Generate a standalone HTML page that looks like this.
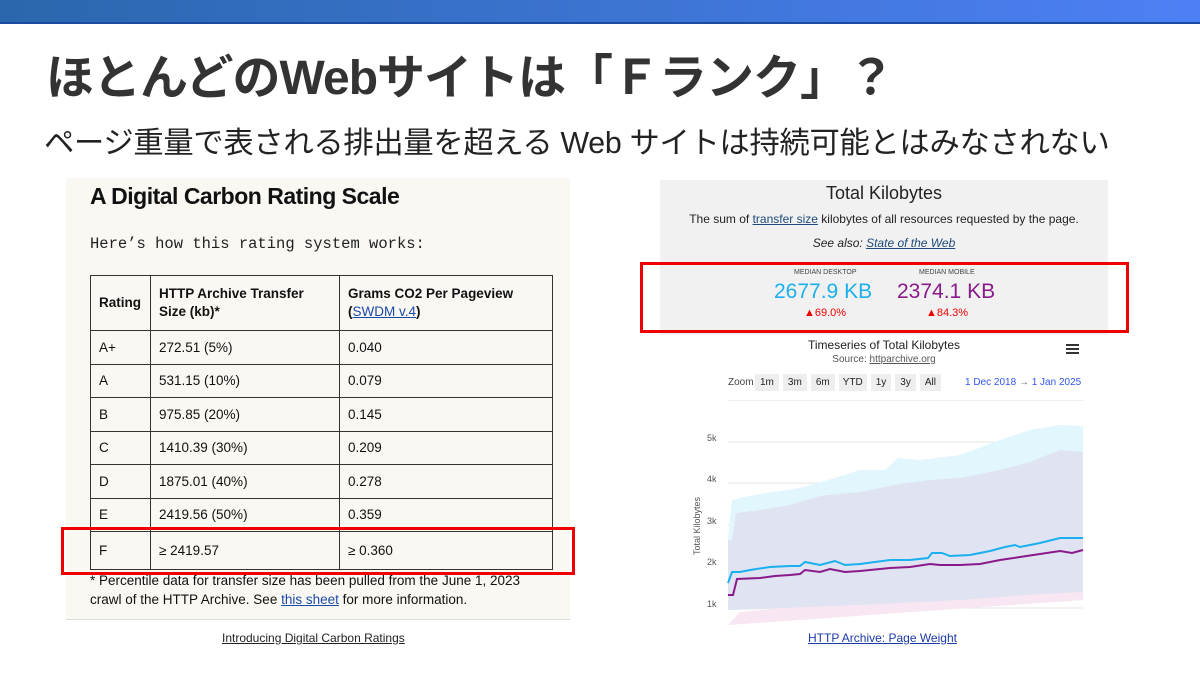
<!DOCTYPE html>
<html><head><meta charset="utf-8"><style>
*{margin:0;padding:0;box-sizing:border-box}
body{width:1200px;height:675px;position:relative;background:#fff;overflow:hidden;font-family:"Liberation Sans","Noto Sans CJK JP",sans-serif}
.a{position:absolute}
.bar{left:0;top:0;width:1200px;height:24px;background:linear-gradient(90deg,#2a67ad,#4d80f5);border-bottom:2px solid #1c4aa0}
.t1{left:46px;top:38px;font-size:48px;font-weight:bold;color:#333;letter-spacing:-1px;white-space:nowrap}
.t2{left:44px;top:118px;font-size:30.3px;color:#222;white-space:nowrap;letter-spacing:-0.3px}
.L{left:66px;top:178px;width:504px;height:442px;background:#faf8f3;border-bottom:1px solid #ddd}
table{position:absolute;left:90px;top:275px;width:463px;border-collapse:collapse;font-size:13.5px;color:#111}
td{border:1.3px solid #333;padding:0 8px;height:33.5px;font-weight:500}
th{border:1.3px solid #333;padding:0 8px;height:55px;text-align:left;font-size:13.5px;line-height:18px}
.red{border:3px solid #e00}
.R{left:660px;top:180px;width:448px;height:445px;background:#fff}
.cap{font-size:12px;color:#222;text-decoration:underline;white-space:nowrap}
</style></head><body>
<div class="a bar"></div>
<div class="a t1">ほとんどのWebサイトは「Ｆランク」？</div>
<div class="a t2">ページ重量で表される排出量を超える Web サイトは持続可能とはみなされない</div>

<div class="a L"></div>
<div class="a" style="left:90px;top:183px;font-size:23px;font-weight:bold;color:#111;letter-spacing:-0.5px">A Digital Carbon Rating Scale</div>
<div class="a" style="left:90px;top:235px;font-size:15.5px;font-family:'Liberation Mono',monospace;color:#222">Here’s how this rating system works:</div>
<table>
<tr><th style="width:60px">Rating</th><th style="width:189px">HTTP Archive Transfer Size (kb)*</th><th>Grams CO2 Per Pageview (<span style="color:#1a4aa8;text-decoration:underline;font-weight:normal">SWDM v.4</span>)</th></tr>
<tr><td>A+</td><td>272.51 (5%)</td><td>0.040</td></tr>
<tr><td>A</td><td>531.15 (10%)</td><td>0.079</td></tr>
<tr><td>B</td><td>975.85 (20%)</td><td>0.145</td></tr>
<tr><td>C</td><td>1410.39 (30%)</td><td>0.209</td></tr>
<tr><td>D</td><td>1875.01 (40%)</td><td>0.278</td></tr>
<tr><td>E</td><td>2419.56 (50%)</td><td>0.359</td></tr>
<tr><td style="height:38px">F</td><td>≥ 2419.57</td><td>≥ 0.360</td></tr>
</table>
<div class="a" style="left:90px;top:571px;font-size:13.5px;line-height:19px;color:#111;width:450px">* Percentile data for transfer size has been pulled from the June 1, 2023 crawl of the HTTP Archive. See <span style="color:#1a4aa8;text-decoration:underline">this sheet</span> for more information.</div>
<div class="a red" style="left:61px;top:527px;width:514px;height:48px"></div>
<div class="a cap" style="left:222px;top:631px">Introducing Digital Carbon Ratings</div>

<div class="a R"></div>
<div class="a" style="left:660px;top:180px;width:448px;height:155px;background:#f1f1f1"></div>
<div class="a" style="left:660px;top:183px;width:448px;text-align:center;font-size:18px;color:#222">Total Kilobytes</div>
<div class="a" style="left:660px;top:212px;width:448px;text-align:center;font-size:12px;color:#222">The sum of <u style="color:#1d4a7a">transfer size</u> kilobytes of all resources requested by the page.</div>
<div class="a" style="left:660px;top:236px;width:448px;text-align:center;font-size:12px;color:#222;font-style:italic">See also: <u style="color:#1d4a7a">State of the Web</u></div>
<div class="a" style="left:794px;top:269px;font-size:7px;color:#444">MEDIAN DESKTOP</div>
<div class="a" style="left:919px;top:269px;font-size:7px;color:#444">MEDIAN MOBILE</div>
<div class="a" style="left:774px;top:280px;font-size:21px;color:#1ab0ee">2677.9 KB</div>
<div class="a" style="left:897px;top:280px;font-size:21px;color:#8a1a8a">2374.1 KB</div>
<div class="a" style="left:804px;top:307px;font-size:11px;color:#e00">▲69.0%</div>
<div class="a" style="left:926px;top:307px;font-size:11px;color:#e00">▲84.3%</div>
<div class="a red" style="left:640px;top:262px;width:489px;height:71px"></div>
<div class="a" style="left:660px;top:338px;width:448px;text-align:center;font-size:12px;color:#222">Timeseries of Total Kilobytes</div>
<div class="a" style="left:660px;top:354px;width:448px;text-align:center;font-size:10px;color:#555">Source: <u>httparchive.org</u></div>
<div class="a" style="left:1066px;top:344px;width:13px;height:2px;background:#333;box-shadow:0 4px 0 #333,0 8px 0 #333"></div>
<div class="a" style="left:728px;top:377px;font-size:10px;color:#444">Zoom</div>
<div class="a" style="left:755px;top:374px;font-size:10px;color:#222;display:flex;gap:4px">
<span style="background:#eee;padding:3px 5px">1m</span><span style="background:#eee;padding:3px 5px">3m</span><span style="background:#eee;padding:3px 5px">6m</span><span style="background:#eee;padding:3px 4px">YTD</span><span style="background:#eee;padding:3px 5px">1y</span><span style="background:#eee;padding:3px 5px">3y</span><span style="background:#eee;padding:3px 5px">All</span></div>
<div class="a" style="left:965px;top:377px;font-size:10px;color:#3355ee;white-space:nowrap">1 Dec 2018 <span style="color:#666">→</span> 1 Jan 2025</div>
<svg class="a" style="left:660px;top:400px" width="448" height="225">
<line x1="68" y1="0" x2="423" y2="0" stroke="#ddd"/>
<g stroke="#e6e6e6"><line x1="68" y1="42" x2="423" y2="42"/><line x1="68" y1="83" x2="423" y2="83"/><line x1="68" y1="125" x2="423" y2="125"/><line x1="68" y1="166" x2="423" y2="166"/><line x1="68" y1="208" x2="423" y2="208"/></g>
<path d="M68 140 L70 118 L72 100 L80 98 L100 94 L140 88 L175 78 L200 70 L225 70 L238 58 L260 60 L300 55 L340 40 L370 30 L400 25 L423 26 L423 200 L68 210Z" fill="#e2f6fd"/>
<path d="M68 140 L72 140 L76 113 L100 110 L130 105 L160 96 L200 92 L240 84 L270 80 L300 78 L340 70 L370 62 L400 50 L423 52 L423 200 L68 210Z" fill="#e0e3f2"/>
<path d="M68 225 L80 212 L120 208 L200 205 L300 200 L380 194 L423 192 L423 200 L68 225Z" fill="#f8e6f2"/>
<path d="M68 183 L72 172 L80 172 L90 170 L110 167 L130 166 L140 166 L145 162 L160 165 L175 161 L185 165 L200 164 L230 160 L250 160 L268 158 L272 153 L282 153 L290 156 L310 155 L330 151 L345 147 L355 145 L360 147 L380 143 L400 138 L423 138" fill="none" stroke="#1ab0ee" stroke-width="2"/>
<path d="M68 195 L73 195 L77 179 L100 178 L115 176 L130 175 L140 174 L145 170 L160 172 L170 169 L185 172 L200 171 L230 168 L250 167 L270 164 L280 165 L300 165 L320 164 L340 160 L360 157 L380 154 L400 151 L412 153 L423 150" fill="none" stroke="#8a1a8a" stroke-width="2"/>
<g font-size="9" fill="#555" font-family="Liberation Sans,sans-serif"><text x="47" y="41">5k</text><text x="47" y="82">4k</text><text x="47" y="124">3k</text><text x="47" y="165">2k</text><text x="47" y="207">1k</text>
<text transform="translate(40,155) rotate(-90)" font-size="9">Total Kilobytes</text></g>
</svg>
<div class="a cap" style="left:808px;top:631px;color:#1a3aa8">HTTP Archive: Page Weight</div>
</body></html>
